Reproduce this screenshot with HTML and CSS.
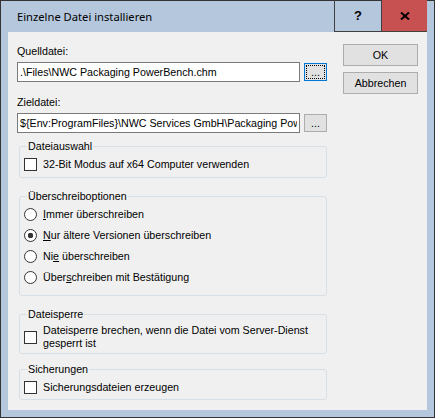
FILE: index.html
```html
<!DOCTYPE html>
<html lang="de">
<head>
    <meta charset="UTF-8">
    <title>Einzelne Datei installieren</title>
    <link rel="stylesheet" href="styles.css">
</head>
<body>
    <div class="window">
        <div class="titlebar">
            <span class="title">Einzelne Datei installieren</span>
            <div class="caption-buttons">
                <span class="cap-btn help">?</span>
                <span class="cap-btn close">
                    <svg width="10" height="8" viewBox="0 0 10 8">
                        <path d="M1 0.5 L9 7.5 M9 0.5 L1 7.5" stroke="#000" stroke-width="2" fill="none"/>
                    </svg>
                </span>
            </div>
        </div>

        <div class="client">
            <div class="main">
                <label class="field-label" for="source">Quelldatei:</label>
                <div class="path-row">
                    <input class="path-input" id="source" type="text" value=".\Files\NWC Packaging PowerBench.chm">
                    <button class="browse focused"><span class="focus-rect">...</span></button>
                </div>

                <label class="field-label target-label" for="target">Zieldatei:</label>
                <div class="path-row">
                    <input class="path-input" id="target" type="text" value="${Env:ProgramFiles}\NWC Services GmbH\Packaging PowerBench">
                    <button class="browse"><span class="focus-rect">...</span></button>
                </div>

                <fieldset class="group group-select">
                    <legend>Dateiauswahl</legend>
                    <label class="option">
                        <input type="checkbox">
                        <span>32-Bit Modus auf x64 Computer verwenden</span>
                    </label>
                </fieldset>

                <fieldset class="group group-overwrite">
                    <legend>Überschreiboptionen</legend>
                    <label class="option radio-row">
                        <input type="radio" name="overwrite">
                        <span><u>I</u>mmer überschreiben</span>
                    </label>
                    <label class="option radio-row">
                        <input type="radio" name="overwrite" checked>
                        <span><u>N</u>ur ältere Versionen überschreiben</span>
                    </label>
                    <label class="option radio-row">
                        <input type="radio" name="overwrite">
                        <span>Ni<u>e</u> überschreiben</span>
                    </label>
                    <label class="option radio-row">
                        <input type="radio" name="overwrite">
                        <span>Über<u>s</u>chreiben mit Bestätigung</span>
                    </label>
                </fieldset>

                <fieldset class="group group-lock">
                    <legend>Dateisperre</legend>
                    <label class="option">
                        <input type="checkbox">
                        <span>Dateisperre brechen, wenn die Datei vom Server-Dienst<br>gesperrt ist</span>
                    </label>
                </fieldset>

                <fieldset class="group group-backup">
                    <legend>Sicherungen</legend>
                    <label class="option">
                        <input type="checkbox">
                        <span>Sicherungsdateien erzeugen</span>
                    </label>
                </fieldset>
            </div>

            <div class="actions">
                <button class="dlg-btn">OK</button>
                <button class="dlg-btn">Abbrechen</button>
            </div>
        </div>
    </div>
</body>
</html>
```

FILE: styles.css
```css
body {
    margin: 0;
    font-family: "Liberation Sans", Arial, sans-serif;
    font-size: 10.7px;
    color: #000;
}

.window {
    width: 435px;
    height: 418px;
    box-sizing: border-box;
    border: 1px solid #333;
    border-top: none;
    background-color: #b4c7dd;
    padding: 0 7px 7px;
    display: flex;
    flex-direction: column;
}

/* title bar */
.titlebar {
    height: 31px;
    display: flex;
    border-top: 1px solid #333;
    margin: 0 -7px;
    padding: 0 7px;
}

.title {
    flex: 1;
    display: flex;
    align-items: center;
    padding-left: 9px;
    font-family: "Noto Sans", sans-serif;
    font-size: 11.2px;
}

.caption-buttons {
    display: flex;
    border-left: 1px solid #404040;
    border-bottom: 1px solid #404040;
    margin-top: -1px;
}

.cap-btn {
    display: flex;
    align-items: center;
    justify-content: center;
}

.help {
    width: 46px;
    border-right: 1px solid #404040;
    font-weight: bold;
    font-size: 13px;
}

.close {
    width: 45px;
    background-color: #c75050;
}

/* dialog body */
.client {
    flex: 1;
    background-color: #f0f0f0;
    display: flex;
    padding: 12px 0 0 9px;
}

.main {
    width: 310px;
}

.field-label {
    display: block;
    line-height: 13px;
    margin-top: 1px;
}

.target-label {
    margin-top: 14px;
}

.path-row {
    display: flex;
    align-items: center;
    gap: 4px;
    height: 20px;
    margin-top: 4px;
}

.path-input {
    width: 283px;
    height: 20px;
    box-sizing: border-box;
    border: 1px solid #7a7a7a;
    padding: 0 2px;
    margin: 0;
    font: inherit;
    background-color: #fff;
    outline: none;
}

.browse {
    width: 23px;
    height: 18px;
    box-sizing: border-box;
    border: 1px solid #adadad;
    background-color: #e1e1e1;
    padding: 1px;
    margin: 0;
    font: inherit;
}

.focus-rect {
    display: block;
    height: 100%;
    box-sizing: border-box;
    border: 1px solid transparent;
    line-height: 12px;
    text-align: center;
}

.browse.focused {
    border-color: #0078d7;
}

.browse.focused .focus-rect {
    border: 1px dotted #000;
}

/* group boxes */
.group {
    margin: 0 0 0 2px;
    width: 308px;
    box-sizing: border-box;
    min-width: 0;
    border: 1px solid #d5dfe5;
    border-radius: 3px;
    padding: 0 4px;
}

.group legend {
    margin-left: 3px;
    padding: 0 1px;
    line-height: 13px;
}

.group-select {
    margin-top: 7px;
    padding-top: 4px;
    padding-bottom: 6px;
}

.group-overwrite {
    margin-top: 12px;
    padding-top: 1px;
    padding-bottom: 7px;
}

.group-lock {
    margin-top: 12px;
    padding-top: 3px;
    padding-bottom: 3px;
}

.group-backup {
    margin-top: 9px;
    padding-top: 4px;
    padding-bottom: 5px;
}

.option {
    display: flex;
    align-items: center;
    gap: 6px;
    min-height: 14px;
    line-height: 13px;
}

.radio-row {
    height: 21px;
}

.option input {
    appearance: none;
    width: 13px;
    height: 13px;
    margin: 0;
    flex: none;
    border: 1px solid #333;
    background-color: #fff;
}

.option input[type="radio"] {
    border-radius: 50%;
}

.option input[type="radio"]:checked {
    background: radial-gradient(circle, #333 0 2.5px, #fff 3px);
}

/* OK / Abbrechen */
.actions {
    margin-left: 16px;
    display: flex;
    flex-direction: column;
    gap: 6px;
}

.dlg-btn {
    width: 75px;
    height: 22px;
    box-sizing: border-box;
    border: 1px solid #adadad;
    background-color: #e1e1e1;
    margin: 0;
    padding: 0;
    font: inherit;
}
```
